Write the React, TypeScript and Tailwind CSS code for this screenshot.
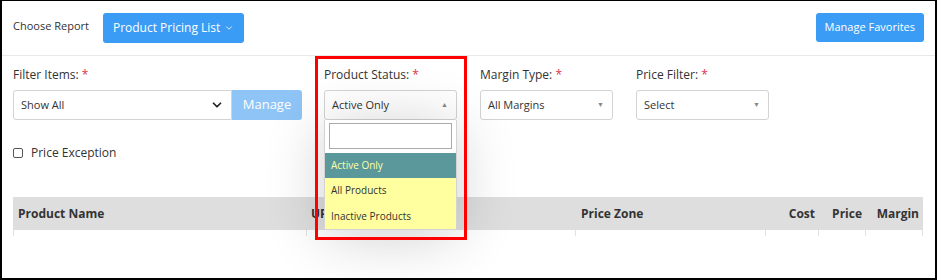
import { ChevronDown } from "lucide-react";

const font = { fontFamily: '"Open Sans", "Liberation Sans", sans-serif' };

function Label({ text }: { text: string }) {
  return (
    <div className="h-[17px] text-[12px] leading-[17px] text-[#333]">
      {text} <span className="text-[#e0324a]">*</span>
    </div>
  );
}

function Select({ value, up }: { value: string; up?: boolean }) {
  return (
    <div className="mt-[7px] flex h-[30px] items-center justify-between rounded-[3px] border border-[#d3d3d3] bg-white pl-[7px] pr-[8px] text-[11px] text-[#333]">
      <span>{value}</span>
      <span className="text-[7px] text-[#888]">{up ? "▲" : "▼"}</span>
    </div>
  );
}

const columns = [
  { name: "Product Name", w: "w-[293px]", align: "text-left pl-[5px]" },
  { name: "UPC", w: "w-[270px]", align: "text-left pl-[5px]" },
  { name: "Price Zone", w: "w-[190px]", align: "text-left pl-[5px]" },
  { name: "Cost", w: "w-[53px]", align: "text-right pr-[4px]" },
  { name: "Price", w: "w-[47px]", align: "text-right pr-[4px]" },
  { name: "Margin", w: "w-[57px]", align: "text-right pr-[4px]" },
];

export default function App() {
  return (
    <div
      style={font}
      className="relative h-[280px] w-[937px] overflow-hidden border-x-2 border-b-2 border-t border-black bg-white"
    >
      {/* header */}
      <div className="flex h-[55px] items-start justify-between border-b border-[#e8e8e8] px-[11px] pt-[12px]">
        <div className="flex items-start">
          <span className="mt-[5px] text-[11px] text-[#333]">Choose Report</span>
          <button className="ml-[14px] flex h-[30px] items-center gap-[4px] rounded-[3px] bg-[#3b9cf6] px-[10px] text-[12px] text-white">
            Product Pricing List
            <ChevronDown size={10} strokeWidth={2} />
          </button>
        </div>
        <button className="h-[29px] rounded-[3px] bg-[#3b9cf6] px-[9px] text-[11px] text-white">
          Manage Favorites
        </button>
      </div>

      {/* filters */}
      <div className="flex px-[11px] pt-[10px]">
        <div className="w-[289px]">
          <Label text="Filter Items:" />
          <div className="mt-[7px] flex h-[30px]">
            <div className="flex flex-1 items-center justify-between rounded-l-[3px] border border-[#d3d3d3] pl-[7px] pr-[7px] text-[11px] text-[#333]">
              <span>Show All</span>
              <ChevronDown size={14} strokeWidth={3} className="text-[#222]" />
            </div>
            <div className="flex w-[70px] items-center justify-center rounded-r-[3px] bg-[#8ec4f6] text-[13px] text-white">
              Manage
            </div>
          </div>
          <div className="mt-[24px] flex items-center gap-[8px] text-[12px] text-[#333]">
            <span className="h-[10px] w-[10px] rounded-[2px] border border-[#555]" />
            Price Exception
          </div>
        </div>

        <div className="relative ml-[22px] w-[133px]">
          <Label text="Product Status:" />
          <Select value="Active Only" up />
          <div className="absolute left-0 top-[54px] z-10 w-[133px] border border-t-0 border-[#d3d3d3] bg-white shadow-[0_6px_60px_rgba(0,0,0,0.2)]">
            <div className="px-[4px] pb-[4px] pt-[3px]">
              <div className="h-[26px] border border-[#aaa] bg-white" />
            </div>
            <div className="flex h-[25px] items-center bg-[#5a989c] pl-[6px] text-[10px] text-[#ffffa8]">
              Active Only
            </div>
            <div className="flex h-[25px] items-center bg-[#ffff9f] pl-[6px] text-[10px] text-[#333]">
              All Products
            </div>
            <div className="flex h-[26px] items-center bg-[#ffff9f] pl-[6px] text-[10px] text-[#333]">
              Inactive Products
            </div>
          </div>
        </div>

        <div className="ml-[23px] w-[133px]">
          <Label text="Margin Type:" />
          <Select value="All Margins" />
        </div>

        <div className="ml-[23px] w-[133px]">
          <Label text="Price Filter:" />
          <Select value="Select" />
        </div>
      </div>

      {/* table */}
      <div className="mx-[11px] mt-[35px] w-[910px]">
        <div className="flex h-[33px] items-center bg-[#dedede] text-[12px] font-bold text-[#333]">
          {columns.map((c) => (
            <div key={c.name} className={`${c.w} ${c.align}`}>
              {c.name}
            </div>
          ))}
        </div>
        <div className="flex h-[6px]">
          {columns.map((c) => (
            <div key={c.name} className={`${c.w} border-l border-[#e2e2e2]`} />
          ))}
          <div className="border-l border-[#e2e2e2]" />
        </div>
      </div>

      {/* annotation */}
      <div className="pointer-events-none absolute left-[313px] top-[55px] z-20 h-[184px] w-[152px] border-[3px] border-[#f00]" />
    </div>
  );
}
